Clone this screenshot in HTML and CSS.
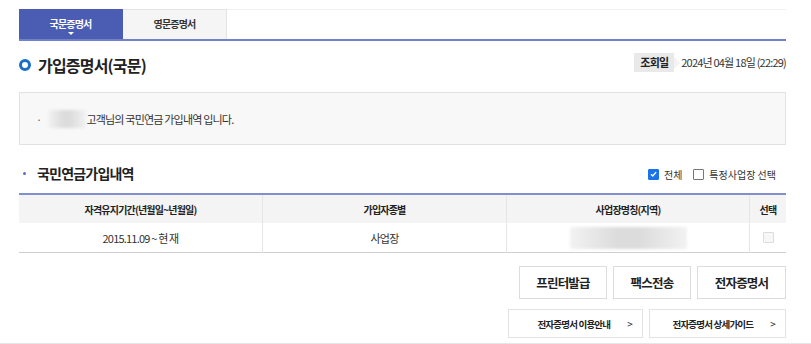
FILE: index.html
```html
<!DOCTYPE html>
<html>
<head>
    <title>가입증명서(국문)</title>
    <link rel="stylesheet" href="styles.css">
</head>
<body>
    <div class="wrap">
        <div class="tabs">
            <a href="#" class="tab on">국문증명서</a>
            <a href="#" class="tab">영문증명서</a>
        </div>

        <div class="title-row">
            <h2 class="title">가입증명서(국문)</h2>
            <div class="date">
                <span class="badge">조회일</span>
                <span class="date-text">2024년 04월 18일 (22:29)</span>
            </div>
        </div>

        <div class="info-box">
            <span class="dot">·</span>
            <span class="blur name"></span>
            <span>고객님의 국민연금 가입내역 입니다.</span>
        </div>

        <div class="sub-row">
            <h3 class="sub-title">국민연금가입내역</h3>
            <div class="checks">
                <label class="chk"><span class="box checked">
                    <svg width="10" height="10" viewBox="0 0 10 10"><path d="M2.2 5.2 L4.2 7.2 L7.9 2.9" fill="none" stroke="#fff" stroke-width="1.6"/></svg>
                </span>전체</label>
                <label class="chk"><span class="box"></span>특정사업장 선택</label>
            </div>
        </div>

        <table class="list">
            <thead>
                <tr>
                    <th class="c1">자격유지기간(년월일~년월일)</th>
                    <th class="c2">가입자종별</th>
                    <th class="c3">사업장명칭(지역)</th>
                    <th class="c4">선택</th>
                </tr>
            </thead>
            <tbody>
                <tr>
                    <td>2015.11.09 ~ 현 재</td>
                    <td>사업장</td>
                    <td><span class="blur place"></span></td>
                    <td><span class="box disabled"></span></td>
                </tr>
            </tbody>
        </table>

        <div class="btns">
            <a href="#" class="btn w1">프린터발급</a>
            <a href="#" class="btn w2">팩스전송</a>
            <a href="#" class="btn w3">전자증명서</a>
        </div>

        <div class="links">
            <a href="#" class="link l1">전자증명서 이용안내 <span class="arr">&gt;</span></a>
            <a href="#" class="link l2">전자증명서 상세가이드 <span class="arr">&gt;</span></a>
        </div>
    </div>
</body>
</html>
```

FILE: styles.css
```css
body { margin: 0; font-family: "Noto Sans CJK KR", "Noto Sans", sans-serif; color: #333; background: #fff; letter-spacing: -0.05em; }
a { text-decoration: none; color: inherit; }
.wrap { padding: 10px 25px 0 19px; border-bottom: 1px solid #e6e6e6; }

.tabs { display: flex; height: 29px; border-bottom: 2px solid #7282c8; border-top: 1px solid #f0f0f0; margin-top: -1px; }
.tab { width: 104px; display: flex; justify-content: center; align-items: center; font-size: 10px; font-weight: 700; color: #333; background: #f5f5f5; border-right: 1px solid #e3e3e3; border-top: 1px solid #e3e3e3; position: relative; padding-bottom: 3px; box-sizing: border-box; margin-top: -1px; }
.tab.on { background: #4b5db3; color: #fff; border-color: #4b5db3; }
.tab.on::after { content: ""; position: absolute; left: 50%; bottom: 4px; margin-left: -3px; border: 3px solid transparent; border-top-color: #fff; border-bottom: 0; }

.title-row { display: flex; justify-content: space-between; align-items: center; margin-top: 12px; height: 24px; }
.title { margin: 0; font-size: 16px; font-weight: 700; color: #222; display: flex; align-items: center; }
.title::before { content: ""; width: 6px; height: 6px; border: 3px solid #1a6fc6; border-radius: 50%; margin-right: 7px; }
.date { display: flex; align-items: center; font-size: 11px; margin-top: -6px; }
.badge { background: #e9e9e9; font-weight: 700; color: #222; padding: 0 6px; height: 19px; line-height: 19px; position: relative; margin-right: 7px; }
.badge::after { content: ""; position: absolute; right: -6px; top: 4px; border: 6px solid transparent; border-left-color: #f3f3f3; border-right: 0; }
.date-text { color: #333; }

.info-box { margin-top: 15px; height: 51px; background: #f8f8f8; border: 1px solid #e2e2e2; display: flex; align-items: center; padding-left: 16px; font-size: 11px; color: #333; }
.dot { margin-right: 7px; color: #666; }
.blur { display: inline-block; background: linear-gradient(90deg, #f2f2f2, #dcdcdc 40%, #dcdcdc 60%, #f2f2f2); border-radius: 2px; filter: blur(1.5px); }
.blur.name { width: 38px; height: 18px; }
.blur.place { width: 117px; height: 22px; vertical-align: middle; }

.sub-row { display: flex; justify-content: space-between; align-items: center; margin-top: 17px; height: 22px; }
.sub-title { margin: 0; font-size: 14px; font-weight: 700; color: #222; display: flex; align-items: center; }
.sub-title::before { content: ""; width: 3px; height: 3px; background: #5a6fc7; border-radius: 50%; margin: 0 11px 0 4px; }
.checks { display: flex; gap: 11px; font-size: 10px; letter-spacing: 0; color: #333; margin-right: 10px; margin-top: 2px; }
.chk { display: flex; align-items: center; }
.chk .box { margin-right: 5px; }
.box { display: inline-flex; width: 9px; height: 9px; border: 1px solid #777; border-radius: 1px; background: #fff; align-items: center; justify-content: center; }
.box.checked { background: #1a73e8; border-color: #1a73e8; }
.box.disabled { border-color: #dcdcdc; background: #f7f7f7; }

.list { width: 100%; border-collapse: collapse; margin-top: 9px; border-top: 2px solid #8090cf; border-bottom: 1px solid #cfcfcf; font-size: 11px; }
.list th { background: #f4f4f4; height: 28px; font-size: 10px; font-weight: 700; color: #222; padding: 0; }
.list td { height: 29px; text-align: center; color: #333; padding: 0; }
.list th + th, .list td + td { border-left: 1px solid #e6e6e6; }
.c1 { width: 243px; }
.c2 { width: 243px; }
.c3 { width: 242px; }

.btns { display: flex; justify-content: flex-end; gap: 6px; margin-top: 13px; }
.btn { height: 33px; box-sizing: border-box; border: 1px solid #dcdcdc; display: flex; align-items: center; justify-content: center; font-size: 12.5px; font-weight: 700; color: #222; }
.w1 { width: 88px; }
.w2 { width: 78px; }
.w3 { width: 89px; }

.links { display: flex; justify-content: flex-end; gap: 6px; margin-top: 10px; padding-bottom: 5px; }
.link { height: 29px; box-sizing: border-box; border: 1px solid #e3e3e3; display: flex; align-items: center; justify-content: flex-end; font-size: 9.5px; font-weight: 700; color: #222; padding-right: 10px; }
.l1 { width: 135px; }
.l2 { width: 137px; }
.arr { font-weight: 400; margin-left: 17px; font-size: 10px; }
```
